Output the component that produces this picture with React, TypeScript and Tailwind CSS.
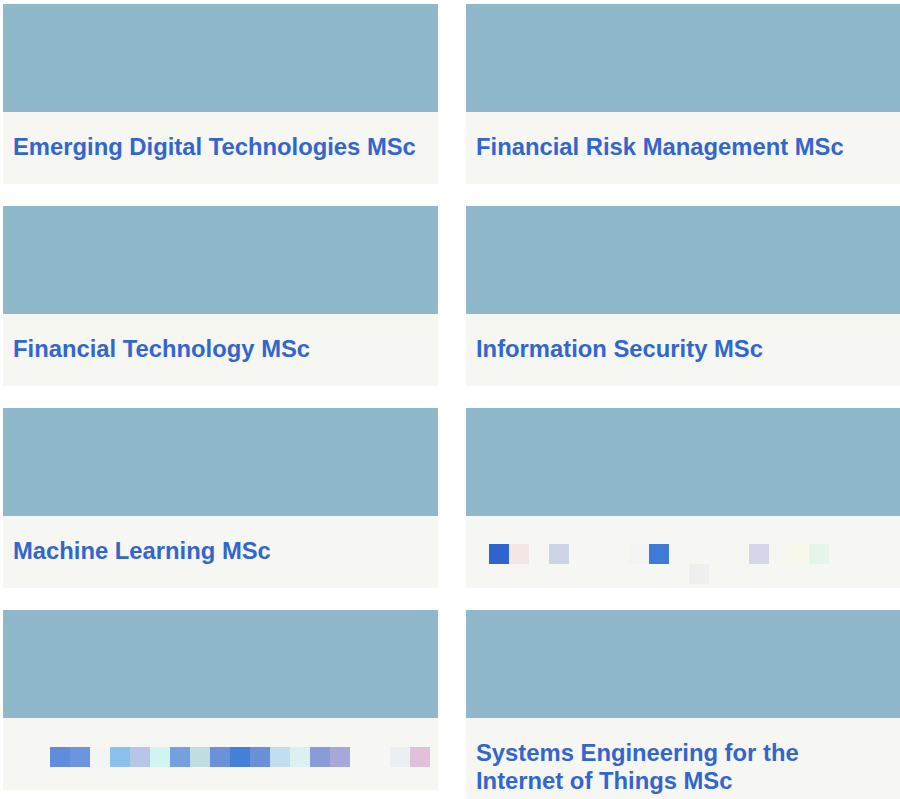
import React from "react";

type Pixel = { c: string; col: number; row?: number };

type Course = {
  title?: string;
  pixels?: { left: number; top: number; cells: Pixel[] };
};

const courses: Course[] = [
  { title: "Emerging Digital Technologies MSc" },
  { title: "Financial Risk Management MSc" },
  { title: "Financial Technology MSc" },
  { title: "Information Security MSc" },
  { title: "Machine Learning MSc" },
  {
    // blurred title
    pixels: {
      left: 23,
      top: 28,
      cells: [
        { c: "#2f64d0", col: 0 },
        { c: "#f5e6e6", col: 1 },
        { c: "#cdd4e8", col: 3 },
        { c: "#f3f3f3", col: 7 },
        { c: "#3d7bd6", col: 8 },
        { c: "#efefef", col: 10, row: 1 },
        { c: "#d5d6ea", col: 13 },
        { c: "#f7f7ec", col: 15 },
        { c: "#e6f5ea", col: 16 },
      ],
    },
  },
  {
    pixels: {
      left: 47,
      top: 29,
      cells: [
        { c: "#5f8ddb", col: 0 },
        { c: "#6c94df", col: 1 },
        { c: "#f3f5f4", col: 2 },
        { c: "#8bbfec", col: 3 },
        { c: "#b7c6e8", col: 4 },
        { c: "#d0f4f0", col: 5 },
        { c: "#779fdf", col: 6 },
        { c: "#c0dde1", col: 7 },
        { c: "#6b91d8", col: 8 },
        { c: "#4480d9", col: 9 },
        { c: "#6a91d8", col: 10 },
        { c: "#c2ddef", col: 11 },
        { c: "#dcf0f2", col: 12 },
        { c: "#8a9cd8", col: 13 },
        { c: "#a8a7da", col: 14 },
        { c: "#ebeff1", col: 17 },
        { c: "#e2bfdb", col: 18 },
      ],
    },
  },
  { title: "Systems Engineering for the Internet of Things MSc" },
];

function PixelTitle({ pixels }: { pixels: NonNullable<Course["pixels"]> }) {
  return (
    <div
      className="grid h-[72px] auto-rows-[20px] grid-cols-[repeat(19,20px)]"
      style={{ paddingLeft: pixels.left, paddingTop: pixels.top }}
    >
      {pixels.cells.map((p, i) => (
        <span
          key={i}
          style={{
            backgroundColor: p.c,
            gridColumnStart: p.col + 1,
            gridRowStart: (p.row ?? 0) + 1,
          }}
        />
      ))}
    </div>
  );
}

function CourseCard({ course }: { course: Course }) {
  return (
    <a href="#" className="block w-[435px] bg-[#f6f6f2]">
      <div className="h-[108px] bg-[#90b8cb]" />
      {course.title ? (
        <div className="min-h-[72px] pl-[10px] pr-4 pt-[21px] pb-[23px]">
          <h3 className="text-[23.8px] font-bold leading-[28px] text-[#3366cc]">
            {course.title}
          </h3>
        </div>
      ) : (
        course.pixels && <PixelTitle pixels={course.pixels} />
      )}
    </a>
  );
}

export default function App() {
  return (
    <div
      className="min-h-screen overflow-hidden bg-white pl-[3px] pt-[4px]"
      style={{ fontFamily: '"Liberation Sans", Arial, sans-serif' }}
    >
      <div className="grid grid-cols-[435px_435px] items-start gap-x-[28px] gap-y-[22px]">
        {courses.map((course, i) => (
          <CourseCard key={i} course={course} />
        ))}
      </div>
    </div>
  );
}
